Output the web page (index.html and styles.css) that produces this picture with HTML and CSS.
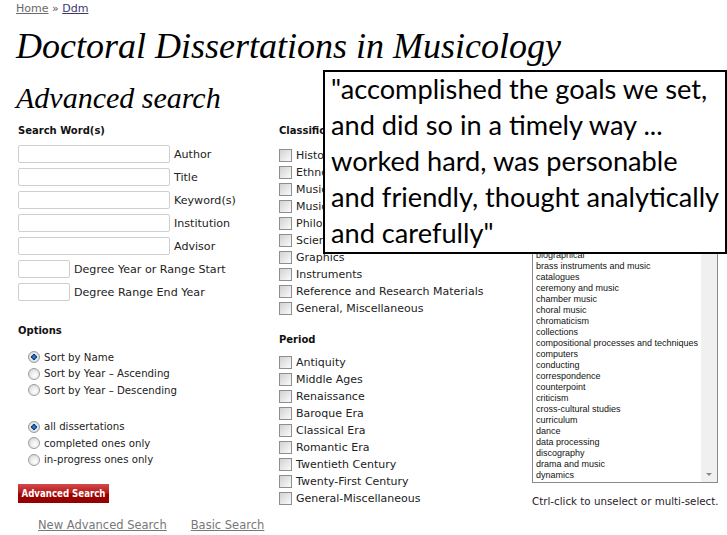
FILE: index.html
```html
<!DOCTYPE html>
<html>
<head>
<meta charset="utf-8">
<link rel="stylesheet" href="styles.css">
</head>
<body>
<div class="page">
  <div class="crumbs"><a class="home" href="#">Home</a> <span class="sep">»</span> <a class="ddm" href="#">Ddm</a></div>
  <h1 class="title">Doctoral Dissertations in Musicology</h1>
  <h2 class="subtitle">Advanced search</h2>
  <form class="form">
    <div class="col col-left">
      <div class="heading">Search Word(s)</div>
      <div class="fields">
        <label class="field"><input class="text wide" type="text"><span>Author</span></label>
        <label class="field"><input class="text wide" type="text"><span>Title</span></label>
        <label class="field"><input class="text wide" type="text"><span>Keyword(s)</span></label>
        <label class="field"><input class="text wide" type="text"><span>Institution</span></label>
        <label class="field"><input class="text wide" type="text"><span>Advisor</span></label>
        <label class="field"><input class="text narrow" type="text"><span>Degree Year or Range Start</span></label>
        <label class="field"><input class="text narrow" type="text"><span>Degree Range End Year</span></label>
      </div>
      <div class="heading options-heading">Options</div>
      <div class="radios">
        <label class="radio"><input type="radio" name="sort" checked><span>Sort by Name</span></label>
        <label class="radio"><input type="radio" name="sort"><span>Sort by Year – Ascending</span></label>
        <label class="radio"><input type="radio" name="sort"><span>Sort by Year – Descending</span></label>
      </div>
      <div class="radios second">
        <label class="radio"><input type="radio" name="status" checked><span>all dissertations</span></label>
        <label class="radio"><input type="radio" name="status"><span>completed ones only</span></label>
        <label class="radio"><input type="radio" name="status"><span>in-progress ones only</span></label>
      </div>
      <button class="submit" type="button">Advanced Search</button>
      <div class="links"><a href="#">New Advanced Search</a><a href="#">Basic Search</a></div>
    </div>
    <div class="col col-mid">
      <div class="heading">Classification</div>
      <div class="checks">
        <label class="check"><input type="checkbox"><span>Historical Musicology</span></label>
        <label class="check"><input type="checkbox"><span>Ethnomusicology</span></label>
        <label class="check"><input type="checkbox"><span>Music Theory and Analysis</span></label>
        <label class="check"><input type="checkbox"><span>Music Education</span></label>
        <label class="check"><input type="checkbox"><span>Philosophy and Aesthetics</span></label>
        <label class="check"><input type="checkbox"><span>Science and Music</span></label>
        <label class="check"><input type="checkbox"><span>Graphics</span></label>
        <label class="check"><input type="checkbox"><span>Instruments</span></label>
        <label class="check"><input type="checkbox"><span>Reference and Research Materials</span></label>
        <label class="check"><input type="checkbox"><span>General, Miscellaneous</span></label>
      </div>
      <div class="heading period-heading">Period</div>
      <div class="checks">
        <label class="check"><input type="checkbox"><span>Antiquity</span></label>
        <label class="check"><input type="checkbox"><span>Middle Ages</span></label>
        <label class="check"><input type="checkbox"><span>Renaissance</span></label>
        <label class="check"><input type="checkbox"><span>Baroque Era</span></label>
        <label class="check"><input type="checkbox"><span>Classical Era</span></label>
        <label class="check"><input type="checkbox"><span>Romantic Era</span></label>
        <label class="check"><input type="checkbox"><span>Twentieth Century</span></label>
        <label class="check"><input type="checkbox"><span>Twenty-First Century</span></label>
        <label class="check"><input type="checkbox"><span>General-Miscellaneous</span></label>
      </div>
    </div>
    <div class="col col-right">
      <div class="listbox">
        <ul class="items">
          <li>acoustics</li>
          <li>aesthetics</li>
          <li>analysis</li>
          <li>anthropology</li>
          <li>archives</li>
          <li>art and music</li>
          <li>authenticity</li>
          <li>avant-garde</li>
          <li>bands</li>
          <li>bibliography</li>
          <li>biographical</li>
          <li>brass instruments and music</li>
          <li>catalogues</li>
          <li>ceremony and music</li>
          <li>chamber music</li>
          <li>choral music</li>
          <li>chromaticism</li>
          <li>collections</li>
          <li>compositional processes and techniques</li>
          <li>computers</li>
          <li>conducting</li>
          <li>correspondence</li>
          <li>counterpoint</li>
          <li>criticism</li>
          <li>cross-cultural studies</li>
          <li>curriculum</li>
          <li>dance</li>
          <li>data processing</li>
          <li>discography</li>
          <li>drama and music</li>
          <li>dynamics</li>
          <li>early music</li>
        </ul>
        <div class="scrollbar"><span class="arrow"></span></div>
      </div>
      <div class="hint">Ctrl-click to unselect or multi-select.</div>
    </div>
  </form>
  <div class="quote"><div class="quote-text">"accomplished the goals we set,<br>and did so in a timely way ...<br>worked hard, was personable<br>and friendly, thought analytically<br>and carefully"</div></div>
</div>
</body>
</html>
```
FILE: styles.css
```css
html, body {
  margin: 0;
  padding: 0;
  background: #fff;
}
body {
  font-family: "DejaVu Sans", Verdana, sans-serif;
  font-size: 11px;
  color: #222;
}
.page {
  position: relative;
  width: 727px;
  height: 535px;
  overflow: hidden;
  padding: 2px 0 0 16px;
  box-sizing: border-box;
}
.crumbs {
  font-size: 11px;
  line-height: 13px;
  height: 13px;
}
.crumbs a { text-decoration: underline; }
.crumbs .home { color: #6a6a6a; }
.crumbs .sep { color: #555; }
.crumbs .ddm { color: #3c3670; }
.title {
  font-family: "Liberation Serif", "Times New Roman", serif;
  font-style: italic;
  font-weight: normal;
  font-size: 36px;
  line-height: 40px;
  margin: 11px 0 0 0;
  color: #000;
}
.subtitle {
  font-family: "Liberation Serif", "Times New Roman", serif;
  font-style: italic;
  font-weight: normal;
  font-size: 30px;
  line-height: 34px;
  margin: 15px 0 0 0;
  color: #000;
}
.form {
  display: flex;
  margin: 9px 0 0 2px;
}
.col-left { width: 261px; }
.col-mid { width: 253px; }
.col-right { width: 186px; padding-top: 13px; }
.heading {
  font-weight: bold;
  font-size: 10px;
  line-height: 14px;
  color: #111;
}
.fields {
  display: flex;
  flex-direction: column;
  gap: 5px;
  margin-top: 7px;
}
.field {
  display: flex;
  align-items: center;
  height: 18px;
  font-size: 11.1px;
}
.text {
  box-sizing: border-box;
  height: 18px;
  border: 1px solid #cfcfcf;
  border-radius: 2px;
  background: #fff;
  margin: 0 4px 0 0;
  padding: 0 2px;
}
.wide { width: 152px; }
.narrow { width: 52px; }
.options-heading { margin-top: 23px; }
.radios {
  margin-top: 11px;
  padding-left: 10px;
  font-size: 10.2px;
}
.radios.second { margin-top: 20px; }
.radio {
  display: flex;
  align-items: center;
  height: 16.5px;
}
.radio input {
  appearance: none;
  -webkit-appearance: none;
  width: 12px;
  height: 12px;
  margin: 0 4px 0 0;
  border: 1px solid #9c9c9c;
  border-radius: 50%;
  box-sizing: border-box;
  background: radial-gradient(circle at 60% 65%, #ffffff 0%, #e6e6e6 55%, #c8c8c8 100%);
}
.radio input:checked {
  background: radial-gradient(circle at 50% 50%, #3d8fdc 0%, #0f5aa8 28%, #0a3f7a 36%, #e9e9e9 42%, #d0d0d0 100%);
}
.submit {
  display: block;
  margin-top: 16px;
  width: 91px;
  height: 19px;
  padding: 0;
  border: 0;
  background: linear-gradient(#d24a4a 0%, #b81c1c 45%, #9e0000 55%, #950000 100%);
  color: #fff;
  font-family: "DejaVu Sans Condensed", "DejaVu Sans", sans-serif;
  font-weight: bold;
  font-size: 9.6px;
  white-space: nowrap;
}
.links {
  display: flex;
  gap: 24px;
  margin: 15px 0 0 20px;
  font-size: 11.5px;
  line-height: 14px;
}
.links a { color: #777; text-decoration: underline; }
.checks {
  margin-top: 8.5px;
}
.check {
  display: flex;
  align-items: center;
  height: 17px;
}
.check input {
  appearance: none;
  -webkit-appearance: none;
  width: 13px;
  height: 13px;
  margin: 0 4px 0 0;
  border: 1px solid #8e8e8e;
  box-sizing: border-box;
  background: linear-gradient(135deg, #d2d2d2 0%, #e6e6e6 50%, #fafafa 100%);
}
.period-heading { margin-top: 16px; }
.period-heading + .checks { margin-top: 7px; }
.listbox {
  position: relative;
  box-sizing: border-box;
  height: 346px;
  border: 1px solid #8a8a8a;
  overflow: hidden;
  background: #fff;
}
.items {
  list-style: none;
  margin: 0;
  padding: 1.5px 0 0 3px;
  font-family: "Liberation Sans", Tahoma, sans-serif;
  font-size: 9px;
  line-height: 11px;
  color: #111;
  white-space: nowrap;
}
.scrollbar {
  position: absolute;
  top: 0;
  right: 0;
  bottom: 0;
  width: 16px;
  background: #f0f0f0;
}
.arrow {
  position: absolute;
  left: 5px;
  bottom: 6px;
  width: 0;
  height: 0;
  border-left: 3px solid transparent;
  border-right: 3px solid transparent;
  border-top: 3px solid #8a8a8a;
}
.hint {
  margin-top: 11px;
  font-size: 10.3px;
  line-height: 14px;
  color: #2a1a2a;
  white-space: nowrap;
}
.quote {
  position: absolute;
  left: 323px;
  top: 70px;
  width: 404px;
  height: 184px;
  box-sizing: border-box;
  border: 2px solid #000;
  background: #fff;
  padding: 0 0 0 6px;
  overflow: hidden;
  font-family: Lato, "Open Sans", sans-serif;
  font-size: 27.2px;
  line-height: 36px;
  color: #000;
  white-space: nowrap;
}
.quote-text { margin-top: -1px; }
```
